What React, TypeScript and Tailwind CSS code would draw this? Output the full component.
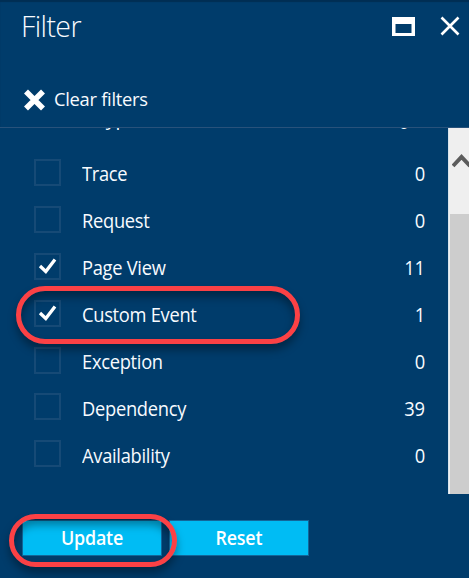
type Row = { label: string; count: number; checked?: boolean };

const rows: Row[] = [
  { label: 'Trace', count: 0 },
  { label: 'Request', count: 0 },
  { label: 'Page View', count: 11, checked: true },
  { label: 'Custom Event', count: 1, checked: true },
  { label: 'Exception', count: 0 },
  { label: 'Dependency', count: 39 },
  { label: 'Availability', count: 0 },
];

function FilterRow({ label, count, checked }: Row) {
  return (
    <div className="flex h-[46.9px] items-start pl-[34px] pr-[23px]">
      <span className="flex h-[27px] w-[27px] shrink-0 items-center justify-center border-2 border-[#164a76]">
        {checked && (
          <svg width="19" height="19" viewBox="0 0 19 19" fill="none" stroke="white" strokeWidth="3.3">
            <path d="M2 9 7.8 14.5 17 2.5" />
          </svg>
        )}
      </span>
      <span className="ml-[21px] mt-[2.4px] flex-1 origin-left scale-x-[.938] whitespace-nowrap leading-[26px] tracking-[-0.3px]">{label}</span>
      <span className="mt-[2.4px] origin-right scale-x-[.94] leading-[26px] tracking-[-0.3px]">{count}</span>
    </div>
  );
}

export default function App() {
  return (
    <main className="relative flex h-[578px] w-[469px] flex-col overflow-hidden bg-[#003c6b] font-['Open_Sans','Noto_Sans',sans-serif] text-[19.5px] text-[#f8fbff]">
      <header className="flex h-[128px] shrink-0 flex-col border-b border-[#28527b] shadow-[inset_0_2px_1px_#002e54]">
        <div className="flex h-[52px] items-center pl-[21px] pr-[9px]">
          <h1 className="flex-1 origin-left text-[28.5px] [font-weight:350] leading-[40px] tracking-[-0.6px]">Filter</h1>
          <svg className="mr-[25px]" width="23" height="19" viewBox="0 0 23 19">
            <path fill="white" fillRule="evenodd" d="M0 0H23V19H0ZM3.5 7V16H19.5V7Z" />
          </svg>
          <svg width="20" height="20" viewBox="0 0 20 20" stroke="white" strokeWidth="2.6">
            <path d="M1.5 1.5 18.5 18.5M18.5 1.5 1.5 18.5" />
          </svg>
        </div>
        <div className="mt-[35px] flex h-[25px] items-center pl-[24px]">
          <svg width="21" height="22" viewBox="0 0 21 22" stroke="white" strokeWidth="5.6">
            <path d="M2 2.5 19 19.5M19 2.5 2 19.5" />
          </svg>
          <span className="ml-[9px] origin-left scale-x-[.965] whitespace-nowrap text-[19px] tracking-[-0.3px]">Clear filters</span>
        </div>
      </header>
      <section className="flex h-[366px] shrink-0">
        <div className="w-[448px] overflow-hidden">
          <div className="flex h-[31px] items-start pl-[95px] pr-[39px] leading-[26px]">
            <span className="mt-[-23px] flex-1">Type</span>
            <span className="mt-[-19px] text-[18px]">0</span>
          </div>
          {rows.map((row) => <FilterRow key={row.label} {...row} />)}
        </div>
        <div className="flex w-[21px] flex-col overflow-hidden border-l border-[#d8e3ec] bg-[#efefef]">
          <div className="h-[86px] pl-[3px] pt-[25px]">
            <svg width="19" height="16" viewBox="0 0 19 16" fill="none" stroke="#5c5c5c" strokeWidth="4">
              <path d="M1 13 9.5 4 18 13" />
            </svg>
          </div>
          <div className="ml-px flex-1 bg-[#cdcdcd]" />
        </div>
      </section>
      <footer className="flex gap-[7px] pl-[22px] pt-[26px] text-[19px] font-semibold leading-[34px] text-white">
        <button className="h-[36px] w-[140px] border border-[#126699] bg-[#00bcf4] pb-px"><span className="inline-block scale-x-[.94] tracking-[-0.2px]">Update</span></button>
        <button className="h-[36px] w-[140px] border border-[#126699] bg-[#00bcf4] pb-px"><span className="inline-block scale-x-[.94] tracking-[-0.2px]">Reset</span></button>
      </footer>
      <div className="absolute left-[16px] top-[286px] h-[58px] w-[284px] rounded-[32px] border-[5px] border-[#fb4145] shadow-[0_6px_8px_rgba(0,0,0,.35),inset_0_6px_8px_rgba(0,0,0,.35)]" />
      <div className="absolute left-[9px] top-[514px] h-[53px] w-[168px] rounded-[32px] border-[5px] border-[#fb4145] shadow-[0_6px_8px_rgba(0,0,0,.35),inset_0_6px_8px_rgba(0,0,0,.35)]" />
    </main>
  );
}
